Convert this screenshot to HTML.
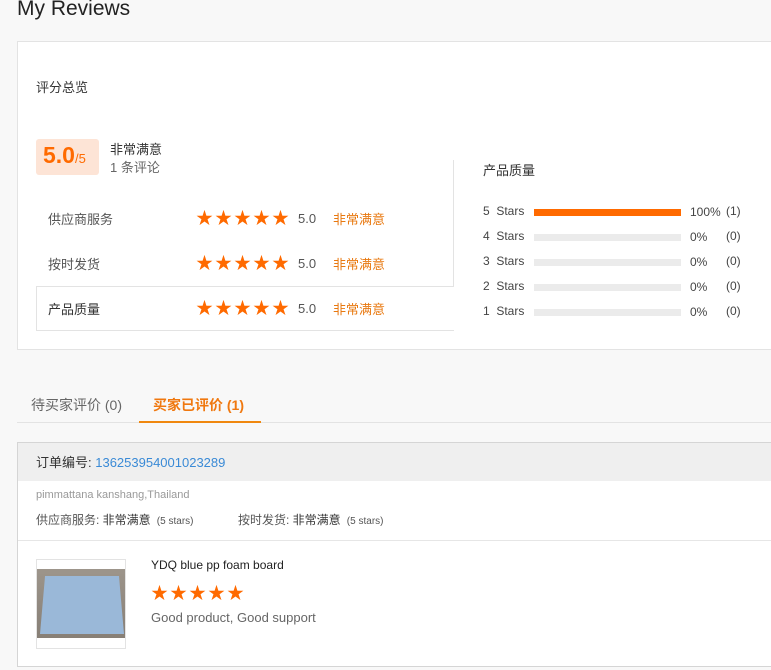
<!DOCTYPE html>
<html><head><meta charset="utf-8"><style>
*{margin:0;padding:0;box-sizing:border-box}
body{width:771px;height:670px;background:#f8f8f8;font-family:"Liberation Sans","Noto Sans CJK SC",sans-serif;color:#333;position:relative;overflow:hidden;font-size:13px}
.a{position:absolute;white-space:nowrap}
.st{color:#ff6a00;font-size:17px;letter-spacing:2px;line-height:18px}
.bar{position:absolute;left:534px;width:147px;height:7px;background:#ebebeb}
</style></head><body>
<div class="a" style="left:17px;top:-3px;font-size:21px;color:#222;">My Reviews</div>
<div class="a" style="left:17px;top:41px;width:760px;height:309px;background:#fff;border:1px solid #e3e3e3;"></div>
<div class="a" style="left:36px;top:77px;font-size:13px;color:#333">评分总览</div>
<div class="a" style="left:36px;top:139px;width:63px;height:36px;background:#fde4d6;border-radius:3px"></div>
<div class="a" style="left:43px;top:142px;font-size:23px;color:#ff6a00;font-weight:bold">5.0<span style="font-size:13px;font-weight:normal">/5</span></div>
<div class="a" style="left:110px;top:139px;font-size:13px;color:#333">非常满意</div>
<div class="a" style="left:110px;top:157px;font-size:13px;color:#666">1 条评论</div>
<div class="a" style="left:453px;top:160px;width:1px;height:126px;background:#e3e3e3"></div>
<div class="a" style="left:36px;top:286px;width:418px;height:45px;border:1px solid #e3e3e3;border-right:none"></div>
<div class="a" style="left:48px;top:209px;color:#555">供应商服务</div>
<div class="a" style="left:48px;top:254px;color:#555">按时发货</div>
<div class="a" style="left:48px;top:299px;color:#333">产品质量</div>
<div class="a st" style="left:196px;top:210px">★★★★★</div>
<div class="a st" style="left:196px;top:255px">★★★★★</div>
<div class="a st" style="left:196px;top:300px">★★★★★</div>
<div class="a" style="left:298px;top:211px;color:#555">5.0</div>
<div class="a" style="left:298px;top:256px;color:#555">5.0</div>
<div class="a" style="left:298px;top:301px;color:#555">5.0</div>
<div class="a" style="left:333px;top:209px;color:#e8780f">非常满意</div>
<div class="a" style="left:333px;top:254px;color:#e8780f">非常满意</div>
<div class="a" style="left:333px;top:299px;color:#e8780f">非常满意</div>
<div class="a" style="left:483px;top:160px;color:#333">产品质量</div>
<div class="a" style="left:483px;top:204px;color:#444;font-size:12px">5&nbsp; Stars</div>
<div class="a" style="left:483px;top:229px;color:#444;font-size:12px">4&nbsp; Stars</div>
<div class="a" style="left:483px;top:254px;color:#444;font-size:12px">3&nbsp; Stars</div>
<div class="a" style="left:483px;top:279px;color:#444;font-size:12px">2&nbsp; Stars</div>
<div class="a" style="left:483px;top:304px;color:#444;font-size:12px">1&nbsp; Stars</div>
<div class="bar" style="top:209px;background:#ff6a00"></div>
<div class="bar" style="top:234px"></div>
<div class="bar" style="top:259px"></div>
<div class="bar" style="top:284px"></div>
<div class="bar" style="top:309px"></div>
<div class="a" style="left:690px;top:205px;font-size:12px;color:#444">100%</div>
<div class="a" style="left:690px;top:230px;font-size:12px;color:#444">0%</div>
<div class="a" style="left:690px;top:255px;font-size:12px;color:#444">0%</div>
<div class="a" style="left:690px;top:280px;font-size:12px;color:#444">0%</div>
<div class="a" style="left:690px;top:305px;font-size:12px;color:#444">0%</div>
<div class="a" style="left:726px;top:204px;font-size:12px;color:#444">(1)</div>
<div class="a" style="left:726px;top:229px;font-size:12px;color:#444">(0)</div>
<div class="a" style="left:726px;top:254px;font-size:12px;color:#444">(0)</div>
<div class="a" style="left:726px;top:279px;font-size:12px;color:#444">(0)</div>
<div class="a" style="left:726px;top:304px;font-size:12px;color:#444">(0)</div>
<div class="a" style="left:17px;top:422px;width:760px;height:1px;background:#e3e3e3"></div>
<div class="a" style="left:139px;top:421px;width:122px;height:2px;background:#f0880f"></div>
<div class="a" style="left:31px;top:395px;font-size:14px;color:#666">待买家评价 (0)</div>
<div class="a" style="left:153px;top:395px;font-size:14px;color:#f0780f;font-weight:bold">买家已评价 (1)</div>
<div class="a" style="left:17px;top:442px;width:760px;height:225px;background:#fff;border:1px solid #d5d5d5"></div>
<div class="a" style="left:18px;top:443px;width:758px;height:38px;background:#efefef"></div>
<div class="a" style="left:18px;top:540px;width:758px;height:1px;background:#e6e6e6"></div>
<div class="a" style="left:36px;top:452px;color:#333">订单编号: <span style="color:#3a8ad6">136253954001023289</span></div>
<div class="a" style="left:36px;top:489px;font-size:11px;color:#999">pimmattana kanshang,Thailand</div>
<div class="a" style="left:36px;top:511px;color:#555;font-size:12px">供应商服务: <span style="color:#333">非常满意</span> <span style="font-size:10px">&nbsp;(5 stars)</span></div>
<div class="a" style="left:238px;top:511px;color:#555;font-size:12px">按时发货: <span style="color:#333">非常满意</span> <span style="font-size:10px">&nbsp;(5 stars)</span></div>
<div class="a" style="left:36px;top:559px;width:90px;height:90px;border:1px solid #e3e3e3;background:#fff"></div>
<div class="a" style="left:37px;top:569px;width:88px;height:69px;background:linear-gradient(#9d958b,#877f76)"></div>
<div class="a" style="left:40px;top:576px;width:84px;height:58px;background:#9ab8d8;clip-path:polygon(6% 0,94% 0,100% 100%,0 100%)"></div>
<div class="a" style="left:151px;top:558px;font-size:12px;color:#222">YDQ blue pp foam board</div>
<div class="a st" style="left:151px;top:585px">★★★★★</div>
<div class="a" style="left:151px;top:610px;color:#666">Good product, Good support</div>
</body></html>
